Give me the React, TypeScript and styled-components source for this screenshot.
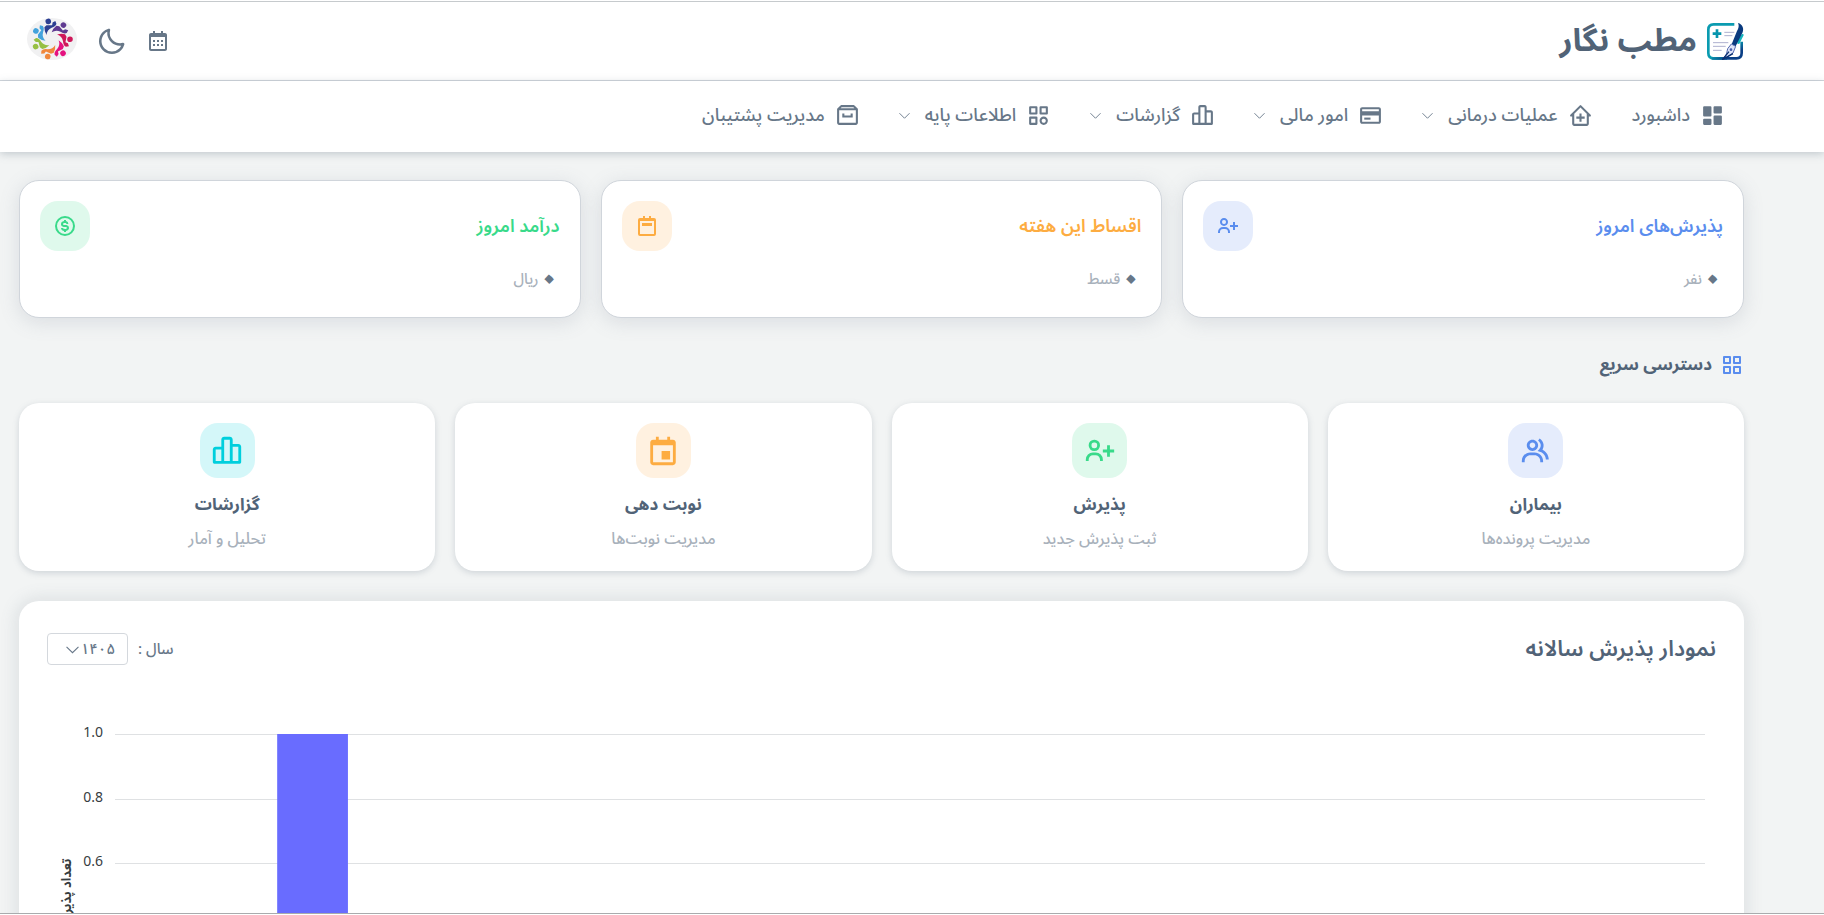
import React from 'react';
import styled, { createGlobalStyle } from 'styled-components';
import {
  BiArchive,
  BiBarChartAlt2,
  BiCalendar,
  BiCalendarEvent,
  BiCategory,
  BiClinic,
  BiCreditCard,
  BiDollarCircle,
  BiGridAlt,
  BiGroup,
  BiMoon,
  BiSolidDashboard,
  BiUserPlus,
} from 'react-icons/bi';

const color = {
  heading: '#516377',
  body: '#677788',
  muted: '#a8b1bb',
  border: '#d0d5db',
  page: '#f2f4f4',
  primary: '#5a8dee',
  success: '#39da8a',
  warning: '#fdac41',
  info: '#00cfdd',
  bar: '#696cff',
};

const tints = {
  primary: '#e5ecfc',
  success: '#dff9ec',
  warning: '#fff1e0',
  info: '#d4f7f9',
};

type Tone = keyof typeof tints;

const GlobalStyle = createGlobalStyle`
  *, *::before, *::after { box-sizing: border-box; }
  body {
    margin: 0;
    background: ${color.page};
    color: ${color.body};
    font-family: "Noto Sans Arabic", "Noto Sans", sans-serif;
    font-size: 16px;
    line-height: 24px;
  }
  h1, h2, h3, p, ul { margin: 0; padding: 0; }
  button, select { font: inherit; color: inherit; }
`;

const Frame = styled.div`
  height: 100vh;
  overflow: hidden;
  padding: 1px 0;
  background: #fff;
`;

const Viewport = styled.div`
  height: 100%;
  overflow: hidden;
  border-top: 1px solid #c6cacd;
  border-bottom: 1px solid #a9abad;
  background: ${color.page};
`;

const Header = styled.header`
  display: flex;
  align-items: center;
  justify-content: space-between;
  height: 79px;
  padding: 0 80px 0 27px;
  border-bottom: 1px solid ${color.border};
  background: #fff;
`;

const Brand = styled.a`
  display: flex;
  align-items: center;
  gap: 10px;
  color: ${color.heading};
  font-size: 32px;
  font-weight: 700;
  line-height: 48px;
  text-decoration: none;
`;

const Tools = styled.div`
  display: flex;
  align-items: center;
  gap: 19px;
`;

const IconButton = styled.button`
  display: flex;
  align-items: center;
  justify-content: center;
  min-width: 24px;
  padding: 0;
  border: 0;
  background: none;
  cursor: pointer;
`;

const NavBar = styled.nav`
  position: relative;
  height: 71px;
  padding: 0 99px;
  background: #fff;
  box-shadow: 0 2px 8px rgba(103, 119, 136, 0.35);
`;

const NavList = styled.ul`
  display: flex;
  align-items: center;
  gap: 39px;
  height: 68px;
  list-style: none;
`;

const NavLink = styled.a`
  display: flex;
  align-items: center;
  gap: 10px;
  color: ${color.body};
  font-size: 18px;
  font-weight: 500;
  text-decoration: none;
  white-space: nowrap;

  svg:last-child:not(:first-child) { margin-right: 5px; }
`;

const Main = styled.main`
  display: flex;
  flex-direction: column;
  padding: 28px 80px 30px 19px;
`;

const StatGrid = styled.section`
  display: grid;
  grid-template-columns: repeat(3, 1fr);
  gap: 20px;
`;

const StatCard = styled.article`
  padding: 20px 20px 23px;
  border: 1px solid ${color.border};
  border-radius: 20px;
  background: #fff;
  box-shadow: 0 4px 20px rgba(103, 119, 136, 0.18);
`;

const StatTop = styled.div`
  display: flex;
  align-items: center;
  justify-content: space-between;
`;

const StatTitle = styled.h2<{ $tone: Tone }>`
  color: ${({ $tone }) => color[$tone]};
  font-size: 18px;
  font-weight: 600;
`;

const IconTile = styled.span<{ $tone: Tone; $large?: boolean }>`
  display: flex;
  align-items: center;
  justify-content: center;
  width: ${({ $large }) => ($large ? 55 : 50)}px;
  height: ${({ $large }) => ($large ? 55 : 50)}px;
  border-radius: 18px;
  background: ${({ $tone }) => tints[$tone]};
  color: ${({ $tone }) => color[$tone]};
`;

const StatValue = styled.p`
  display: flex;
  align-items: center;
  margin-top: 13px;
  font-size: 36px;
  font-weight: 900;
  line-height: 30px;

  small {
    color: ${color.muted};
    font-size: 15px;
    font-weight: 500;
  }
`;

const SectionTitle = styled.h2`
  display: flex;
  align-items: center;
  gap: 8px;
  margin: 35px 0 26px;
  color: ${color.heading};
  font-size: 17px;
  font-weight: 700;

  svg { color: ${color.primary}; }
`;

const QuickGrid = styled.section`
  display: grid;
  grid-template-columns: repeat(4, 1fr);
  gap: 20px;
`;

const QuickCard = styled.a`
  display: flex;
  flex-direction: column;
  align-items: center;
  padding: 20px 20px 22px;
  border-radius: 20px;
  background: #fff;
  box-shadow: 0 2px 6px rgba(103, 119, 136, 0.25);
  text-decoration: none;
`;

const QuickTitle = styled.h3`
  margin-top: 15px;
  color: ${color.heading};
  font-size: 17px;
  font-weight: 700;
`;

const QuickText = styled.p`
  margin-top: 12px;
  color: ${color.muted};
  font-size: 16px;
  font-weight: 500;
  line-height: 20px;
`;

const ChartCard = styled.section`
  margin-top: 30px;
  padding: 32px 28px;
  border-radius: 20px;
  background: #fff;
  box-shadow: 0 0 16px 4px rgba(103, 119, 136, 0.14);
`;

const ChartHeader = styled.div`
  display: flex;
  align-items: center;
  justify-content: space-between;
`;

const ChartTitle = styled.h2`
  color: ${color.heading};
  font-size: 22px;
  font-weight: 600;
  line-height: 32px;
`;

const YearField = styled.div`
  display: flex;
  align-items: center;
  gap: 10px;
  font-size: 15px;
  font-weight: 500;
`;

const SelectBox = styled.div`
  display: grid;
  align-items: center;
  width: 81px;
  border: 1px solid #d4d8dd;
  border-radius: 4px;
  color: ${color.body};

  select, svg { grid-area: 1 / 1; }
  svg {
    justify-self: end;
    margin-left: 18px;
    pointer-events: none;
  }
`;

const YearSelect = styled.select`
  appearance: none;
  width: 100%;
  height: 30px;
  padding: 0 12px;
  border: 0;
  background: transparent;
  line-height: 24px;
`;

const Chart = styled.div`
  display: flex;
  direction: ltr;
  margin-top: 49px;
  padding-right: 11px;
`;

const Plot = styled.svg`
  flex: 1;
  min-width: 0;
`;

const TickLabel = styled.text`
  fill: #373d3f;
  font-family: "Noto Sans", sans-serif;
  font-size: 14px;
`;

const AxisTitle = styled.text`
  fill: #373d3f;
  font-size: 13px;
  font-weight: 700;
`;

const Chevron = ({ size = 11, strokeWidth = 1 }: { size?: number; strokeWidth?: number }) => (
  <svg width={size} height={size} viewBox="0 0 12 12" fill="none" stroke="currentColor" strokeWidth={strokeWidth} aria-hidden="true">
    <path d="M0.5 3.5 6 9l5.5-5.5" />
  </svg>
);

const InstallmentIcon = () => (
  <svg width="24" height="24" viewBox="0 0 24 24" fill="currentColor" aria-hidden="true">
    <path fillRule="evenodd" d="M19 4h-3V2h-2v2h-4V2H8v2H5a2 2 0 0 0-2 2v14a2 2 0 0 0 2 2h14a2 2 0 0 0 2-2V6a2 2 0 0 0-2-2ZM5 20V7h14v13Z" />
    <path d="M7 9h10v3H7z" />
  </svg>
);

const BrandMark = () => (
  <svg width="37" height="37" viewBox="0 0 111 111" fill="none" aria-hidden="true">
    <defs>
      <linearGradient id="sheet" x1="0" y1="0" x2="1" y2="1">
        <stop offset="0.45" stopColor="#0a9bb0" />
        <stop offset="0.75" stopColor="#0a3f86" />
      </linearGradient>
    </defs>
    <path d="M82 4H20Q4 4 4 20v70q0 16 16 16h40" stroke="#0a9bb0" strokeWidth="8" />
    <path d="M14 106h74q16 0 16-16V56" stroke="url(#sheet)" strokeWidth="8" />
    <path d="M108 34 94 62v-10Z" fill="#12b5bd" stroke="#12b5bd" strokeWidth="6" />
    <path d="M30 19v26M17 32h26" stroke="#0695ad" strokeWidth="8" />
    <path d="M52 28h30M52 38h24M18 59h46M18 70h38M18 82h26" stroke="#aeb0cf" strokeWidth="3" />
    <path d="M93 0c14 4 18 16 14 28L86 70 74 64 90 24c5-8 7-16 3-24Z" fill="#0a3a7e" />
    <path d="M73 63 86 70 78 90 48 109q14-16 14-32Z" fill="#dfe4f7" stroke="#5167ae" strokeWidth="3" />
    <path d="M78 92 46 110 66 86" stroke="#0a2f70" strokeWidth="4" />
    <circle cx="72" cy="80" r="4" fill="#4a5fae" />
  </svg>
);

const memberColors = ['#2c3f92', '#5f3a91', '#cf1759', '#e5127f', '#f0873c', '#97c043', '#43a3dc'];

const Avatar = () => (
  <svg width="50" height="46" viewBox="0 0 50 46" aria-hidden="true">
    <ellipse cx="25" cy="21" rx="25" ry="21" fill="#f1f1f2" />
    {memberColors.map((fill, i) => (
      <g key={fill} fill={fill} transform={`translate(25 21) rotate(${-12 + (i * 360) / 7})`}>
        <circle cx="0" cy="-18" r="2.8" />
        <path d="M7-17 4-16 3-13.5-2.500-14.500-5-13Q-6-9-4.500-5-3-10 2-11 6.500-11.500 7.500-14Z" />
      </g>
    ))}
  </svg>
);

const navItems = [
  { label: 'داشبورد', Icon: BiSolidDashboard, menu: false },
  { label: 'عملیات درمانی', Icon: BiClinic, menu: true },
  { label: 'امور مالی', Icon: BiCreditCard, menu: true },
  { label: 'گزارشات', Icon: BiBarChartAlt2, menu: true },
  { label: 'اطلاعات پایه', Icon: BiCategory, menu: true },
  { label: 'مدیریت پشتیبان', Icon: BiArchive, menu: false },
];

const stats: { title: string; unit: string; tone: Tone; icon: React.ReactNode }[] = [
  { title: 'پذیرش‌های امروز', unit: 'نفر', tone: 'primary', icon: <BiUserPlus size={24} /> },
  { title: 'اقساط این هفته', unit: 'قسط', tone: 'warning', icon: <InstallmentIcon /> },
  { title: 'درآمد امروز', unit: 'ریال', tone: 'success', icon: <BiDollarCircle size={24} /> },
];

const shortcuts: { title: string; text: string; tone: Tone; Icon: typeof BiGroup }[] = [
  { title: 'بیماران', text: 'مدیریت پرونده‌ها', tone: 'primary', Icon: BiGroup },
  { title: 'پذیرش', text: 'ثبت پذیرش جدید', tone: 'success', Icon: BiUserPlus },
  { title: 'نوبت دهی', text: 'مدیریت نوبت‌ها', tone: 'warning', Icon: BiCalendarEvent },
  { title: 'گزارشات', text: 'تحلیل و آمار', tone: 'info', Icon: BiBarChartAlt2 },
];

const ticks = [
  { label: '1.0', y: 20 },
  { label: '0.8', y: 85 },
  { label: '0.6', y: 149 },
  { label: '0.4', y: 214 },
  { label: '0.2', y: 278 },
  { label: '0.0', y: 343 },
];

export default function App() {
  return (
    <Frame dir="rtl" lang="fa">
      <GlobalStyle />
      <Viewport>
        <Header>
          <Brand href="#">
            <BrandMark />
            مطب نگار
          </Brand>
          <Tools>
            <IconButton type="button" aria-label="تقویم">
              <BiCalendar size={24} />
            </IconButton>
            <IconButton type="button" aria-label="حالت شب">
              <BiMoon size={31} />
            </IconButton>
            <IconButton type="button" aria-label="حساب کاربری">
              <Avatar />
            </IconButton>
          </Tools>
        </Header>

        <NavBar>
          <NavList>
            {navItems.map(({ label, Icon, menu }) => (
              <li key={label}>
                <NavLink href="#">
                  <Icon size={25} />
                  {label}
                  {menu && <Chevron />}
                </NavLink>
              </li>
            ))}
          </NavList>
        </NavBar>

        <Main>
          <StatGrid>
            {stats.map(({ title, unit, tone, icon }) => (
              <StatCard key={title}>
                <StatTop>
                  <StatTitle $tone={tone}>{title}</StatTitle>
                  <IconTile $tone={tone}>{icon}</IconTile>
                </StatTop>
                <StatValue>
                  ۰ <small>{unit}</small>
                </StatValue>
              </StatCard>
            ))}
          </StatGrid>

          <SectionTitle>
            <BiGridAlt size={24} />
            دسترسی سریع
          </SectionTitle>

          <QuickGrid>
            {shortcuts.map(({ title, text, tone, Icon }) => (
              <QuickCard key={title} href="#">
                <IconTile $tone={tone} $large>
                  <Icon size={34} />
                </IconTile>
                <QuickTitle>{title}</QuickTitle>
                <QuickText>{text}</QuickText>
              </QuickCard>
            ))}
          </QuickGrid>

          <ChartCard>
            <ChartHeader>
              <ChartTitle>نمودار پذیرش سالانه</ChartTitle>
              <YearField>
                <label htmlFor="year">سال :</label>
                <SelectBox>
                  <YearSelect id="year" defaultValue="1405">
                    <option value="1405">۱۴۰۵</option>
                  </YearSelect>
                  <Chevron size={13} />
                </SelectBox>
              </YearField>
            </ChartHeader>
            <Chart>
              <svg width="68" height="400" aria-hidden="true">
                {ticks.map(({ label, y }) => (
                  <TickLabel key={label} x="56" y={y + 3} textAnchor="end">
                    {label}
                  </TickLabel>
                ))}
                <AxisTitle transform="translate(24 181) rotate(-90)" textAnchor="middle">
                  تعداد پذیرش
                </AxisTitle>
              </svg>
              <Plot height="400" role="img" aria-label="نمودار پذیرش سالانه">
                {ticks.map(({ label, y }) => (
                  <rect key={label} x="0" y={y} width="100%" height="1" fill="#dfe1e3" />
                ))}
                <rect x="10.2%" y="20" width="4.45%" height="323" fill={color.bar} />
              </Plot>
            </Chart>
          </ChartCard>
        </Main>
      </Viewport>
    </Frame>
  );
}
